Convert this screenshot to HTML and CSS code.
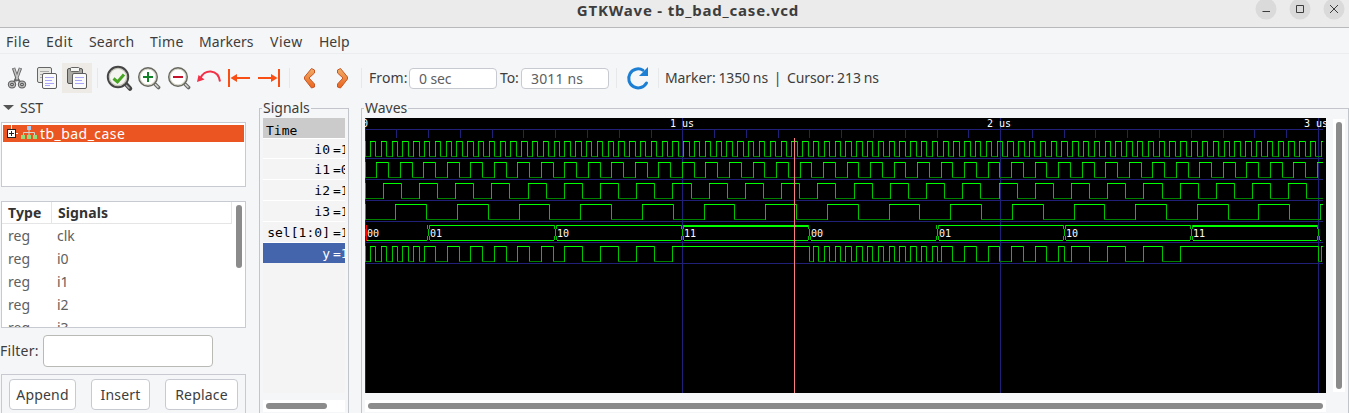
FILE: index.html
```html
<!DOCTYPE html>
<html lang="en">
<head>
<meta charset="utf-8">
<title>GTKWave - tb_bad_case.vcd</title>
<link rel="stylesheet" href="styles.css">
</head>
<body>
<header class="titlebar">
  <h1 class="title">GTKWave - tb_bad_case.vcd</h1>
  <div class="window-controls">
    <svg width="22" height="22" viewBox="0 0 22 22"><circle cx="11" cy="9" r="10.5"/><path d="M7.500 11.5h7.500"/></svg>
    <svg width="22" height="22" viewBox="0 0 22 22"><circle cx="11" cy="9" r="10.5"/><path d="M7.500 5.500h7v7h-7z"/></svg>
    <svg width="22" height="22" viewBox="0 0 22 22"><circle cx="11" cy="9" r="10.5"/><path d="M7 5l8 8m0-8l-8 8"/></svg>
  </div>
</header>
<nav class="menubar">
  <span class="m-file">File</span><span class="m-edit">Edit</span><span class="m-search">Search</span><span class="m-time">Time</span><span class="m-markers">Markers</span><span class="m-view">View</span><span class="m-help">Help</span>
</nav>
<div class="toolbar">
  <div class="tool-group edit-tools">
    <svg class="tool" viewBox="0 0 30 30">
      <path d="M11.5 5l4.5 13M18.500 5l-5 13" stroke="#666" stroke-width="3.400"/>
      <path d="M11.800 5.500l4 11.500M18.200 5.500l-4 11.500" stroke="#c4c4c4" stroke-width="1.500"/>
      <g stroke="#5d5d5d" stroke-width="3.400" fill="none"><ellipse cx="10" cy="21.500" rx="2.500" ry="2.300"/><ellipse cx="20" cy="21.500" rx="2.500" ry="2.300"/></g>
      <g stroke="#bbb" stroke-width="1.200" fill="none"><ellipse cx="10" cy="21.500" rx="2.600" ry="2.400"/><ellipse cx="20" cy="21.500" rx="2.600" ry="2.400"/></g>
      <path d="M12 19l2-3M18 19l-2-3" stroke="#666" stroke-width="2"/>
    </svg>
    <svg class="tool" viewBox="0 0 30 30">
      <rect x="5.500" y="4.500" width="14" height="15" rx="1.500" fill="#e6e6e2" stroke="#666"/>
      <path d="M8 8.500h9M8 11.500h6M8 14.500h3" stroke="#aaa"/>
      <rect x="10.500" y="10.500" width="14" height="15" rx="1.500" fill="#fafafa" stroke="#5d5d5d"/>
      <path d="M13 14.500h9M13 17.500h7M13 20.500h9M13 22.500h5" stroke="#aaa6fa"/>
    </svg>
    <svg class="tool active" viewBox="0 0 30 30">
      <rect x="5.500" y="5.500" width="15" height="15" rx="1.500" fill="#aaa9a3" stroke="#555"/>
      <rect x="8.500" y="4.500" width="9" height="4" rx="1" fill="#f5f5f3" stroke="#666"/>
      <rect x="10.500" y="10.500" width="14" height="15" rx="1.500" fill="#fafafa" stroke="#5d5d5d"/>
      <path d="M13 14.500h9M13 17.500h7M13 20.500h9" stroke="#aaa6fa"/>
    </svg>
  </div>
  <i class="sep"></i>
  <div class="tool-group zoom-tools">
    <svg class="tool" viewBox="0 0 30 30">
      <path d="M21 20l5 5.500" stroke="#444" stroke-width="4.500" stroke-linecap="round"/>
      <path d="M22 22l3.500 3.500" stroke="#aaa" stroke-width="1.500"/>
      <circle cx="14" cy="14" r="10" fill="#f4f4f0" stroke="#454545" stroke-width="2.400"/>
      <circle cx="14" cy="14" r="8.700" fill="none" stroke="#c3c3b9" stroke-width="1.200"/>
      <path d="M9.500 15.500l4 3.500 6.500-7.500" fill="none" stroke="#47a523" stroke-width="3"/>
    </svg>
    <svg class="tool" viewBox="0 0 30 30">
      <path d="M20 20l4.500 4.500" stroke="#666" stroke-width="3.800" stroke-linecap="round"/>
      <path d="M21 21l3.500 3.500" stroke="#d8d8d0" stroke-width="1.500"/>
      <circle cx="14" cy="14" r="9" fill="#fff" stroke="#686860" stroke-width="2"/>
      <circle cx="14" cy="14" r="8" fill="none" stroke="#d5d5c7" stroke-width="1.200"/>
      <path d="M9 14h10M14 9v10" stroke="#118326" stroke-width="2"/>
    </svg>
    <svg class="tool" viewBox="0 0 30 30">
      <path d="M20 20l4.500 4.500" stroke="#666" stroke-width="3.800" stroke-linecap="round"/>
      <path d="M21 21l3.500 3.500" stroke="#d8d8d0" stroke-width="1.500"/>
      <circle cx="14" cy="14" r="9" fill="#fff" stroke="#686860" stroke-width="2"/>
      <circle cx="14" cy="14" r="8" fill="none" stroke="#d5d5c7" stroke-width="1.200"/>
      <path d="M9 14h10" stroke="#c4142b" stroke-width="2"/>
    </svg>
    <svg class="tool" viewBox="0 0 30 30">
      <path d="M6 16C10 5.500 24 5.500 26 18.500" fill="none" stroke="#f23148" stroke-width="2"/>
      <path d="M4.500 12L3 19l7.500-2.500z" fill="#f23148"/>
    </svg>
    <svg class="tool" viewBox="0 0 30 30">
      <path d="M5 6v18M9 15h17" stroke="#fa4f14" stroke-width="2"/><path d="M6.500 15l6.500-4v8z" fill="#fa4f14"/>
    </svg>
    <svg class="tool" viewBox="0 0 30 30">
      <path d="M25 6v18M4 15h17" stroke="#fa4f14" stroke-width="2"/><path d="M23.500 15l-6.500-4v8z" fill="#fa4f14"/>
    </svg>
  </div>
  <i class="sep"></i>
  <div class="tool-group edge-tools">
    <svg class="tool" viewBox="0 0 30 30">
      <defs><linearGradient id="amber" x1="0" y1="0" x2="0" y2="1"><stop offset="0" stop-color="#f0ae68"/><stop offset="1" stop-color="#eb641d"/></linearGradient></defs>
      <path d="M16.500 5.500l3 1.500v3L14 15l5.500 6v3l-3 1-7-9v-2z" fill="url(#amber)" stroke="#c75624" stroke-linejoin="round"/>
    </svg>
    <svg class="tool" viewBox="0 0 30 30">
      <path d="M15.500 5.500l-3 1.500v3L18 15l-5.500 6v3l3 1 7-9v-2z" fill="url(#amber)" stroke="#c75624" stroke-linejoin="round"/>
    </svg>
  </div>
  <i class="sep"></i>
  <label class="from-label">From:</label><span class="entry entry-from">0 sec</span>
  <label class="to-label">To:</label><span class="entry entry-to">3011 ns</span>
  <i class="sep"></i>
  <svg class="tool reload" viewBox="0 0 30 30">
    <path d="M23.500 20A9.500 9.500 0 1 1 20 7.200" fill="none" stroke="#1c7fd4" stroke-width="3" stroke-linecap="round"/>
    <path d="M25 4v9h-9z" fill="#1c7fd4"/>
  </svg>
  <i class="sep"></i>
  <span class="status">Marker: 1350 ns&nbsp; |&nbsp; Cursor: 213 ns</span>
</div>
<main class="workspace">
  <aside class="sidebar">
    <div class="sst"><i class="triangle"></i><span>SST</span></div>
    <div class="tree">
      <div class="tree-item">
        <svg width="34" height="17" viewBox="0 0 34 17">
          <path d="M8.500 0v4M13 8.500h2" stroke="#fff"/>
          <rect x="4.500" y="4.500" width="8" height="8" fill="#fff" stroke="#222"/><path d="M6 8.500h5M8.500 6v5" stroke="#222"/>
          <path d="M26 5v3M20.500 10V7.500h11V10M26 7v3" fill="none" stroke="#d3d3cb"/>
          <rect x="24" y="1" width="4" height="4" fill="#a9cdf2"/><g fill="#8fdc7a"><rect x="18" y="10" width="4" height="4"/><rect x="24" y="10" width="4" height="4"/><rect x="30" y="10" width="4" height="4"/></g>
        </svg>
        <span>tb_bad_case</span>
      </div>
    </div>
    <div class="sigtable">
      <div class="grid">
        <div class="row head"><b>Type</b><b>Signals</b></div>
        <div class="row"><span>reg</span><span>clk</span></div>
        <div class="row"><span>reg</span><span>i0</span></div>
        <div class="row"><span>reg</span><span>i1</span></div>
        <div class="row"><span>reg</span><span>i2</span></div>
        <div class="row"><span>reg</span><span>i3</span></div>
      </div>
      <div class="gutter"><i class="thumb"></i></div>
    </div>
    <div class="filter"><label>Filter:</label><input type="text" aria-label="Filter"></div>
    <div class="actions"><button class="b-append">Append</button><button class="b-insert">Insert</button><button class="b-replace">Replace</button></div>
  </aside>
  <section class="frame signals">
    <h2 class="legend">Signals</h2>
    <div class="names">
      <div class="time">Time</div>
      <div class="name">i0<span>=1</span></div>
      <div class="name">i1<span>=0</span></div>
      <div class="name">i2<span>=1</span></div>
      <div class="name">i3<span>=1</span></div>
      <div class="name">sel[1:0]<span>=1</span></div>
      <div class="name selected">y<span>=1</span></div>
    </div>
    <div class="hscroll"><i class="thumb"></i></div>
  </section>
  <section class="frame waves">
    <h2 class="legend">Waves</h2>
    <div class="wave-area">
      <svg id="plot" width="961" height="275" viewBox="0 0 961 275"></svg>
      <div class="vscroll"><i class="thumb"></i></div>
    </div>
    <div class="hscroll"><i class="thumb"></i></div>
  </section>
</main>
<script src="waves.js"></script>
</body>
</html>
```
FILE: styles.css
```css
* { box-sizing: border-box; }
html, body { height: 100%; }
body {
  margin: 0;
  overflow: hidden;
  display: flex;
  flex-direction: column;
  background: #f5f6f7;
  color: #3d3d3d;
  font: 14px/20px "Noto Sans", "Open Sans", sans-serif;
}
svg { display: block; flex: none; fill: none; }
h1, h2 { margin: 0; font-weight: normal; }

.titlebar {
  flex: none;
  height: 28px;
  display: grid;
  grid-template-columns: 1fr auto 1fr;
  background: #ebebeb;
  border-bottom: 1px solid #b8b9ba;
}
.title { grid-column: 2; font-size: 15px; font-weight: bold; line-height: 20px; letter-spacing: .8px; padding-left: 27px; }
.window-controls { display: flex; justify-content: flex-end; gap: 12px; padding-right: 4px; }
.window-controls circle { fill: #dadada; }
.window-controls path { stroke: #3d3d3d; }

.menubar { flex: none; height: 26px; border-bottom: 1px solid #ebedef; display: flex; padding: 4px 0 0 6px; white-space: nowrap; letter-spacing: .3px; }
.m-file { width: 40px; letter-spacing: .5px; }
.m-edit { width: 43px; letter-spacing: .5px; }
.m-search { width: 61px; letter-spacing: .15px; }
.m-time { width: 49px; }
.m-markers { width: 71px; letter-spacing: .05px; }
.m-view { width: 49px; letter-spacing: .5px; }
.m-help { letter-spacing: 0; }

.toolbar { flex: none; height: 44px; padding: 4px 0 0 2px; display: flex; align-items: center; white-space: nowrap; }
.tool-group { display: flex; }
.tool { width: 30px; height: 30px; }
.active { background: #eeebe7; }
.sep { flex: none; width: 1px; height: 20px; background: #e7e8ea; }
.edit-tools { margin-right: 5px; }
.zoom-tools { margin: 0 5px 0 6px; }
.edge-tools { margin: 0 6px 0 5px; }
.from-label { flex: none; width: 40px; margin-left: 7px; letter-spacing: .1px; }
.entry { flex: none; width: 88px; height: 21px; border: 1px solid #c7cad1; border-radius: 4px; background: #fff; color: #606060; padding-left: 9px; line-height: 19px; letter-spacing: -.1px; }
.entry-to { letter-spacing: .15px; }
.to-label { flex: none; width: 21px; margin-left: 3px; letter-spacing: -.1px; }
.entry + .sep { margin: 0 0 0 7px; }
.reload { margin: 0 5px 0 6px; }
.status { margin-left: 6px; letter-spacing: -.1px; word-spacing: -.7px; }

.workspace { flex: 1; min-height: 0; display: flex; }
.sidebar { width: 259px; flex: none; display: flex; flex-direction: column; }
.sst { flex: none; height: 24px; display: flex; gap: 6px; padding-left: 3px; line-height: 20px; }
.triangle { width: 11px; height: 5px; margin-top: 7px; background: #555; clip-path: polygon(0 0, 100% 0, 50% 100%); }
.tree { height: 65px; margin-left: 1px; width: 245px; background: #fff; border: 1px solid #c7cad1; padding: 2px 1px; flex: none; }
.tree-item { height: 17px; display: flex; gap: 3px; background: #eb5521; color: #fff; line-height: 18px; letter-spacing: .45px; }
.sigtable { flex: none; height: 127px; width: 245px; margin: 14px 0 0 1px; border: 1px solid #c7cad1; background: #fff; display: flex; overflow: hidden; }
.grid { width: 230px; color: #606060; }
.row { height: 23px; display: grid; grid-template-columns: 49px 1fr; line-height: 23px; }
.row > * { padding-left: 6px; }
.head { height: 22px; color: #333; letter-spacing: .1px; line-height: 22px; border-bottom: 1px solid #e5e5e5; border-right: 1px solid #e5e5e5; }
.head b + b { border-left: 1px solid #e5e5e5; }
.gutter { flex: 1; padding: 3px 0 0 4px; }
.thumb { display: block; background: #8b8b8b; border-radius: 3px; }
.gutter .thumb { width: 6px; height: 63px; }
.filter { display: flex; align-items: center; height: 46px; flex: none; }
.filter label { width: 43px; letter-spacing: .25px; }
.filter input { width: 170px; height: 32px; border: 1px solid #b9b9b5; border-radius: 4px; background: #fff; padding: 0; }
.actions { flex: none; width: 245px; height: 48px; margin-left: 1px; border: 1px solid #c7cad1; display: flex; align-items: flex-start; gap: 15px; padding: 4px 7px; }
.actions button { height: 31px; padding: 0; border: 1px solid #c7cad1; border-radius: 4px; background: #fff; color: #3d3d3d; font: inherit; letter-spacing: .2px; }
.b-append { width: 67px; }
.b-insert { width: 59px; }
.b-replace { width: 73px; }

.frame { border: 1px solid #c2c6cc; border-bottom: 0; margin-top: 10px; padding-left: 3px; flex: none; height: 320px; }
.signals { width: 90px; margin-right: 12px; }
.waves { width: 988px; }
.legend { width: max-content; height: 20px; margin: -11px 0 0 -1px; padding: 0 1px; line-height: 20px; font-size: 14px; background: #f5f6f7; }
.names { width: 82px; height: 275px; overflow: hidden; background: #f4f4f4; color: #000; font: 13px/20px "DejaVu Sans Mono", monospace; white-space: nowrap; }
.time { height: 20px; padding: 3px 0 0 3px; background: #cbcbcb; }
.name { height: 21px; display: flex; justify-content: flex-end; border-top: 1px solid #fff; padding-top: 1px; letter-spacing: .03px; }
.name:nth-child(2) { height: 20px; }
.name span { width: 16px; margin-left: 3px; margin-right: -4px; }
.selected { background: #4464ac; color: #fff; }
.wave-area { display: flex; gap: 7px; }
.hscroll { height: 12px; margin-top: 7px; background: #fff; padding: 3px; width: 961px; }
.hscroll .thumb { height: 6px; }
.signals .hscroll { width: 82px; }
.signals .hscroll .thumb { width: 61px; }
.vscroll { width: 12px; height: 273px; margin-top: 1px; padding: 3px; background: #fff; }
.vscroll .thumb { height: 267px; }

#plot { background: #000; shape-rendering: crispEdges; font: 10px "DejaVu Sans Mono", monospace; }
#plot text { fill: #fff; }
.grid-line { stroke: #202078; }
.high { stroke: #0f0; }
.low { stroke: #008200; }
.edge { stroke: #00c400; }
.start { stroke: #f00; }
.marker { stroke: #f98080; }
```
FILE: waves.js
```js
const plot = document.getElementById('plot');
const SCALE = 0.3178;
const END = 3011;
const RIGHT = 958;
const px = t => Math.floor(t * SCALE);
const parts = [];
const hline = (x1, x2, y, c) => parts.push(`<path class="${c}" d="M${x1} ${y + 0.5}H${x2}"/>`);
const vline = (x, y1, y2, c) => parts.push(`<path class="${c}" d="M${x + 0.5} ${y1}V${y2}"/>`);
const label = (x, y, s) => parts.push(`<text x="${x}" y="${y}">${s}</text>`);

// time ruler
hline(0, RIGHT, 11, 'grid-line');
for (let t = 0; t <= 3000; t += 100) {
  vline(px(t), t % 1000 ? 11 : 0, t % 1000 ? 20 : 275, 'grid-line');
}
label(-3, 9, '0');
label(305, 9, '1 us');
label(622, 9, '2 us');
label(939, 9, '3 us');

// single-bit trace from a list of toggle times, starting low
function trace(row, toggles) {
  const top = 23 + row * 21;
  let x = 0, level = 0;
  for (const t of toggles) {
    const nx = px(t);
    hline(x, nx + 1, top + (level ? 0 : 15), level ? 'high' : 'low');
    vline(nx, top, top + 16, 'edge');
    x = nx;
    level ^= 1;
  }
  hline(x, RIGHT, top + (level ? 0 : 15), level ? 'high' : 'low');
  vline(0, top, top + 16, 'edge');
}

const clock = half => {
  const out = [];
  for (let t = half; t < END; t += half) out.push(t);
  return out;
};
const halves = [17, 37, 57, 97];
for (let row = 0; row < 6; row++) hline(0, RIGHT, 40 + row * 21, 'grid-line');
halves.forEach((h, row) => trace(row, clock(h)));

// sel bus: a zero value has no upper line, an all-ones value has a thick one
const changes = [0, 200, 600, 1000, 1400, 1800, 2200, 2600, 3000];
const values = ['00', '01', '10', '11', '00', '01', '10', '11', ''];
changes.forEach((t, i) => {
  const x = px(t);
  const next = i < 8 ? px(changes[i + 1]) - 1 : 956;
  const v = values[i];
  const raised = v !== '00' && v !== '';
  if (raised) hline(x + 2, next, 107, 'high');
  if (v === '11') hline(x + 2, next, 108, 'high');
  hline(x + 2, next, 122, 'high');
  if (i) {
    vline(x - 1, 107, 111, 'edge');
    vline(x, 111, 118, 'edge');
    vline(x - 1, 118, 122, 'edge');
    if (raised) vline(x + 1, 107, 111, 'edge');
    vline(x + 1, 118, 122, 'edge');
  }
  if (v) label(x + 2, 119, v);
});
vline(1, 107, 123, 'start');
vline(0, 111, 118, 'start');

// y follows the selected input and holds its value while sel is 11
const levelAt = (t, i) => Math.floor(t / halves[i]) % 2;
const selAt = t => (t < 200 || t >= 3000 ? 0 : Math.floor((t - 200) / 400 + 1) % 4);
const yToggles = [];
let current = 0;
for (let t = 1; t <= END; t++) {
  const sel = selAt(t);
  if (sel === 3) continue;
  const v = levelAt(t, sel);
  if (v !== current) { yToggles.push(t); current = v; }
}
trace(5, yToggles);

vline(429, 20, 275, 'marker');
plot.innerHTML = parts.join('');
```
